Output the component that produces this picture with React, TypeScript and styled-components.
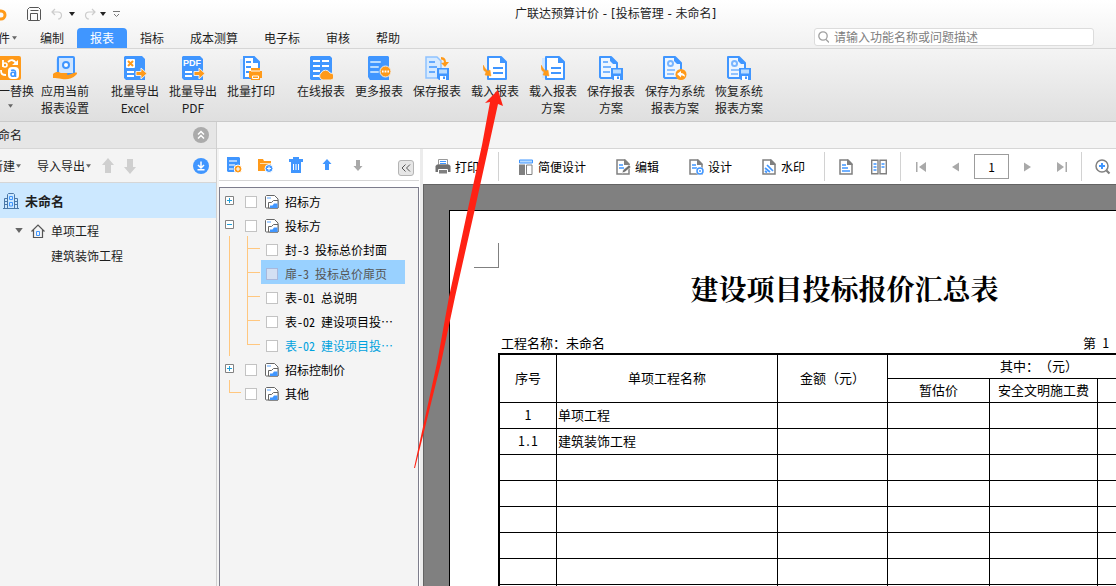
import React from "react";
import styled, { createGlobalStyle, css } from "styled-components";

const UI_FONT = `"Noto Sans CJK SC", "Liberation Sans", sans-serif`;
const MONO_FONT = `"Noto Sans Mono CJK SC", "Noto Sans CJK SC", monospace`;

const BLUE = "#4096ff";
const ORANGE = "#ff9a1a";
const LINE = "#d6d6d6";
const GUIDE = "#ffc77f";

const GlobalStyle = createGlobalStyle`
  *, *::before, *::after { box-sizing: border-box; }
  body { margin: 0; font: 12px/16px ${UI_FONT}; color: #1e1e1e; overflow: hidden; text-spacing-trim: space-all; }
  button, input { font: inherit; color: inherit; margin: 0; }
  button { border: 0; padding: 0; background: none; white-space: nowrap; }
  svg { display: block; flex: none; }
  ul { list-style: none; margin: 0; padding: 0; }
`;

/* ---------- window frame ---------- */

const AppWindow = styled.div`
  display: flex;
  flex-direction: column;
  height: 100vh;
  position: relative;
  overflow: hidden;
  background: #f4f4f4;
`;

const TopArea = styled.header`
  flex: none;
  background: linear-gradient(#ffffff, #f1f1f1);
  border-bottom: 1px solid ${LINE};
`;

const TitleBar = styled.div`
  display: flex;
  align-items: center;
  height: 28px;
`;

const QuickAccess = styled.div`
  display: flex;
  align-items: center;
  flex: none;
  width: 515px;
  height: 24px;
`;

const QuickButton = styled.button<{ $w: number }>`
  display: flex;
  align-items: center;
  justify-content: center;
  width: ${(p) => p.$w}px;
  height: 20px;
`;

const WindowTitle = styled.h1`
  margin: 0;
  font-family: "DejaVu Sans", "Noto Sans CJK SC", sans-serif;
  font-size: 12px;
  font-weight: 400;
  line-height: 28px;
  white-space: nowrap;
`;

const Clip = styled.div<{ $w: number }>`
  display: flex;
  flex: none;
  justify-content: flex-end;
  align-items: center;
  width: ${(p) => p.$w}px;
  overflow: hidden;
  white-space: nowrap;
`;

const MenuBar = styled.nav`
  display: flex;
  height: 20px;
  padding-right: 22px;
`;

const MenuTab = styled.button<{ $active?: boolean }>`
  flex: none;
  padding: 0 13px;
  line-height: 20px;
  border-radius: 4px 4px 0 0;
  ${(p) => p.$active && css`background: ${BLUE}; color: #fff;`}
`;

const FileTab = styled.button`
  display: flex;
  flex: none;
  align-items: center;
  gap: 2px;
  padding-right: 10px;
  line-height: 20px;
`;

const SearchBox = styled.label`
  display: flex;
  align-items: center;
  gap: 5px;
  width: 280px;
  height: 18px;
  margin-left: auto;
  padding: 0 3px;
  background: #fff;
  border: 1px solid #dcdcdc;
  border-radius: 3px;
`;

const SearchInput = styled.input`
  flex: 1;
  min-width: 0;
  height: 16px;
  padding: 0;
  border: 0;
  outline: 0;
  background: transparent;
  &::placeholder { color: #808080; opacity: 1; }
`;

/* ---------- ribbon ---------- */

const Ribbon = styled.div`
  display: flex;
  flex: none;
  height: 73px;
  background: linear-gradient(#f4f4f4, #dfdfdf);
  border-bottom: 1px solid #cacaca;
`;

const RibbonGroup = styled.div`
  display: flex;
  & + & { margin-left: 12px; }
`;

const RibbonButton = styled.button<{ $w?: number; $start?: boolean }>`
  display: flex;
  flex: none;
  flex-direction: column;
  align-items: ${(p) => (p.$start ? "flex-start" : "center")};
  width: ${(p) => p.$w ?? 58}px;
  height: 72px;
  padding-top: 7px;
  line-height: 17px;
`;

const RibbonLabel = styled.span`
  padding-top: 2px;
  text-align: center;
  white-space: pre-line;
`;

const RibbonCaret = styled.span`
  padding: 5px 0 0 10px;
`;

/* ---------- workspace ---------- */

const Workspace = styled.main`
  display: flex;
  flex: 1;
  min-height: 0;
`;

const ProjectPane = styled.aside`
  flex: none;
  width: 217px;
  border-right: 1px solid #d0d0d0;
`;

const PaneBar = styled.div<{ $shade?: boolean }>`
  display: flex;
  align-items: center;
  height: ${(p) => (p.$shade ? 27 : 34)}px;
  padding-right: 7px;
  background: ${(p) => (p.$shade ? "#e6e6e6" : "#f4f4f4")};
  border-bottom: 1px solid ${LINE};
`;

const RoundButton = styled.button`
  margin-left: auto;
`;

const DropButton = styled.button`
  display: flex;
  align-items: center;
  gap: 1px;
`;

const BarGap = styled.span<{ $w: number }>`
  flex: none;
  width: ${(p) => p.$w}px;
`;

const ProjectRow = styled.li<{ $selected?: boolean; $level?: number }>`
  display: flex;
  align-items: center;
  height: ${(p) => (p.$selected ? 35 : 25)}px;
  gap: 6px;
  padding-left: ${(p) => (p.$level === 2 ? 51 : p.$level === 1 ? 15 : 3)}px;
  ${(p) =>
    p.$selected &&
    css`
      background: #cce8ff;
      font-size: 13px;
      font-weight: 700;
    `}
`;

const DocumentArea = styled.section`
  display: flex;
  flex: 1;
  flex-direction: column;
  min-width: 0;
`;

const DocumentStrip = styled.div`
  flex: none;
  height: 27px;
  border-bottom: 1px solid ${LINE};
`;

const DocumentBody = styled.div`
  display: flex;
  flex: 1;
  min-height: 0;
  padding-left: 2px;
`;

const ReportPane = styled.section`
  display: flex;
  flex: none;
  flex-direction: column;
  width: 204px;
  padding-right: 4px;
  background: linear-gradient(to left, #ececec 3px, #fff 3px);
`;

const ReportTools = styled.div`
  display: flex;
  align-items: center;
  gap: 15px;
  height: 32px;
  padding: 0 5px 0 7px;
  border-bottom: 1px solid ${LINE};
`;

const CollapseButton = styled.button`
  display: flex;
  align-items: center;
  justify-content: center;
  align-self: flex-end;
  width: 16px;
  height: 16px;
  margin: 0 0 4px auto;
  background: #e6e6e6;
  border: 1px solid #b4b4b4;
  border-radius: 3px;
`;

const ReportTree = styled.ul`
  flex: 1;
  margin-top: 6px;
  background: #f4f4f4;
  border: 1px solid #7d7d8c;
  border-bottom: 0;
  font-family: ${MONO_FONT};
  color: #000;
`;

const TreeRow = styled.li`
  display: flex;
  align-items: center;
  height: 24px;
`;

const TreeLabel = styled.label<{ $child?: boolean; $selected?: boolean; $link?: boolean }>`
  display: flex;
  flex: none;
  align-items: center;
  width: 144px;
  height: 24px;
  padding: 4px 0 0 ${(p) => (p.$child ? 5 : 0)}px;
  gap: ${(p) => (p.$child ? 7 : 6)}px;
  line-height: 20px;
  white-space: nowrap;
  color: ${(p) => (p.$selected ? "#555" : p.$link ? "#00a2de" : "#000")};
  background: ${(p) => (p.$selected ? "#99d1ff" : "transparent")};
`;

const TreeCheck = styled.input<{ $dim?: boolean }>`
  appearance: none;
  flex: none;
  width: 12px;
  height: 12px;
  background: ${(p) => (p.$dim ? "#d3e0f3" : "#fff")};
  border: 1px solid ${(p) => (p.$dim ? "#a8b8dc" : "#c3c3c3")};
`;

const Expander = styled.button`
  flex: none;
  width: 9px;
  height: 9px;
  margin: 0 11px 0 5px;
`;

const FolderMark = styled.span`
  flex: none;
  padding-left: 2px;
`;

const Trunk = styled.span`
  flex: none;
  width: 18px;
  height: 24px;
  margin-left: 9px;
  border-left: 1px solid ${GUIDE};
`;

const Branch = styled.span<{ $last?: boolean; $root?: boolean }>`
  display: grid;
  flex: none;
  grid-template-rows: 13px 11px;
  width: ${(p) => (p.$root ? 12 : 13)}px;
  height: 24px;
  margin: ${(p) => (p.$root ? "0 4px 0 9px" : "0 1px 0 0")};
  &::before {
    content: "";
    border-left: 1px solid ${GUIDE};
    border-bottom: 1px solid ${GUIDE};
  }
  &::after {
    content: "";
    border-left: ${(p) => (p.$last ? 0 : 1)}px solid ${GUIDE};
  }
`;

/* ---------- preview ---------- */

const Preview = styled.section`
  display: flex;
  flex: 1;
  flex-direction: column;
  min-width: 0;
  overflow: hidden;
`;

const PreviewTools = styled.div`
  display: flex;
  flex: none;
  height: 35px;
  background: #fff;
  color: #000;
`;

const ToolGroup = styled.div<{ $gap: number; $left: number; $right: number }>`
  display: flex;
  flex: none;
  align-items: center;
  gap: ${(p) => p.$gap}px;
  padding: 0 ${(p) => p.$right}px 0 ${(p) => p.$left}px;
`;

const ToolDivider = styled.span`
  flex: none;
  width: 1px;
  height: 29px;
  margin-top: 3px;
  background: #d2d2d2;
`;

const ToolButton = styled.button`
  display: flex;
  align-items: center;
  gap: 4px;
`;

const PageInput = styled.input`
  width: 35px;
  height: 25px;
  padding: 0;
  border: 1px solid #9c9c9c;
  text-align: center;
  background: #fff;
`;

const Desk = styled.div`
  flex: 1;
  padding: 25px 0 0 25px;
  background: #808080;
  border: solid #636363;
  border-width: 1px 0 0 1px;
  overflow: hidden;
`;

const Paper = styled.article`
  width: 791px;
  padding: 32px 48px 48px;
  background: #fff;
  border: 1px solid #000;
  font: 13px/20px ${MONO_FONT};
  color: #000;
`;

const CropMark = styled.div`
  width: 25px;
  height: 25px;
  margin-left: -24px;
  border: solid #808080;
  border-width: 0 1px 1px 0;
`;

const ReportTitle = styled.h2`
  margin: 2px 0 27px;
  font-family: "Noto Serif CJK SC", "Noto Sans CJK SC", serif;
  font-size: 28px;
  font-weight: 700;
  line-height: 36px;
  text-align: center;
  white-space: nowrap;
`;

const ReportInfo = styled.div`
  display: flex;
  justify-content: space-between;
  padding-left: 3px;
`;

const PageNumber = styled.span`
  width: 108px;
`;

const ReportTable = styled.table`
  width: 693px;
  table-layout: fixed;
  border: solid #000;
  border-width: 2px 0 0 2px;
  border-spacing: 0;
  th, td {
    padding: 0 1px 1px;
    font-weight: 400;
    line-height: 20px;
    border: solid #000;
    border-width: 0 1px 1px 0;
    white-space: nowrap;
  }
  th { height: 24px; }
  td { height: 26px; }
  td:first-child { text-align: center; }
`;

const Annotation = styled.svg`
  position: absolute;
  top: 0;
  left: 0;
  pointer-events: none;
`;

/* ---------- icons ---------- */

const Caret = ({ color = "#666", w = 5 }: { color?: string; w?: number }) => (
  <svg width={w} height={w > 6 ? 5 : 4} viewBox="0 0 6 4"><path d="M0 0h6L3 4z" fill={color} /></svg>
);

const Big = ({ children }: { children: React.ReactNode }) => (
  <svg width="24" height="24" viewBox="0 0 24 24" fill="none">{children}</svg>
);

const Small = ({ children }: { children: React.ReactNode }) => (
  <svg width="16" height="16" viewBox="0 0 16 16" fill="none">{children}</svg>
);

const ReplaceIcon = () => (
  <Big>
    <rect x="-1" y="0" width="24" height="24" rx="2" fill={ORANGE} />
    <path d="M5 4v7" stroke="#fff" strokeWidth="1.800" />
    <circle cx="7" cy="9" r="2" stroke="#fff" strokeWidth="1.600" />
    <path d="M10 6c3-3 6-2 8 1" stroke="#fff" strokeWidth="1.800" />
    <path d="M20 4v5h-6z" fill="#fff" />
    <rect x="10" y="11" width="11" height="12" rx="4" fill="#fff" />
    <circle cx="15" cy="18.200" r="2" stroke={BLUE} strokeWidth="1.600" />
    <path d="M13 14.500c3-1 4.500 0 4.500 2v4.500" stroke={BLUE} strokeWidth="1.600" />
    <path d="M3 14c0 4 1 5 5 5" stroke="#fff" strokeWidth="1.800" />
  </Big>
);

const ApplyIcon = () => (
  <Big>
    <path d="M3 3v14h3V3z" fill="#cfe5ff" />
    <rect x="5" y="1" width="16" height="17" rx="1" fill="#cfe5ff" stroke={BLUE} strokeWidth="2" />
    <circle cx="13" cy="9" r="3" fill="#fff" stroke={BLUE} strokeWidth="2" />
    <path d="M0 18c3-3 6-2 8-1h5c2 0 2 2 0 2h-3 5l6-2c3-1 4 0 2 2-4 4-9 5-14 4-4-1-6-1-9-1z" fill={ORANGE} />
  </Big>
);

const ExportArrow = () => (
  <path d="M13 15.500h5V12l6 5.500-6 5.500v-3.500h-5z" fill={ORANGE} stroke="#eee" strokeWidth="1" />
);

const ExcelIcon = () => (
  <Big>
    <path d="M2 0h17l3 3v21H3l-2-2V1z" fill={BLUE} />
    <rect x="3" y="3" width="9" height="9" rx="1" fill="#fff" />
    <path d="M5 5l5 5M10 5l-5 5" stroke={ORANGE} strokeWidth="2" />
    <path d="M4 16h7M4 20h7" stroke="#fff" strokeWidth="2" />
    <ExportArrow />
  </Big>
);

const PdfIcon = () => (
  <Big>
    <path d="M2 0h17l3 3v21H3l-2-2V1z" fill={BLUE} />
    <text x="2" y="10" fill="#fff" fontFamily="Liberation Sans" fontWeight="700" fontSize="9">PDF</text>
    <path d="M4 16h7M4 20h7" stroke="#fff" strokeWidth="2" />
    <ExportArrow />
  </Big>
);

const BatchPrintIcon = () => (
  <Big>
    <path d="M1 3h5v20H1z" fill="#cfe5ff" />
    <path d="M5 1h10l5 5v16H5z" fill="#fff" stroke={BLUE} strokeWidth="2" />
    <path d="M14 0l7 7h-7z" fill={BLUE} />
    <path d="M7 6h5M7 11h5M7 16h3" stroke={BLUE} strokeWidth="2" />
    <path d="M12 12h9v3h2v7h-2v2h-9v-2h-2v-7h2z" fill={ORANGE} />
    <path d="M12 15h9M13.500 20h6v2.500h-6z" stroke="#fff" strokeWidth="1" />
  </Big>
);

const OnlineIcon = () => (
  <Big>
    <path d="M2 0h19l2 2v20l-2 2H2l-1-1V1z" fill={BLUE} />
    <path d="M4 5h7m2 0h7M4 10h7m2 0h7M4 15h7M4 20h7" stroke="#fff" strokeWidth="2" />
    <path d="M14 24a4 4 0 0 1-2-7 5 5 0 0 1 9 0 3.500 3.500 0 0 1 1 7z" fill={ORANGE} stroke="#eee" />
  </Big>
);

const MoreIcon = () => (
  <Big>
    <path d="M2 0h19l1 1v23H3l-2-3V1z" fill={BLUE} />
    <path d="M4 6h9M4 11h7M4 16h7" stroke="#b9dcff" strokeWidth="2" strokeLinecap="round" />
    <circle cx="18.500" cy="15.500" r="5.500" fill={ORANGE} stroke="#eee" />
    <path d="M15 15.500h1.600m1 0h1.800m1 0h1.600" stroke="#fff" strokeWidth="2" />
  </Big>
);

const DiskMark = () => (
  <>
    <path d="M12 12h12v12H14l-2-2z" fill={BLUE} />
    <path d="M14 13.500h8v4h-8z" fill="#b9dcff" />
    <path d="M15 20h6v4h-6z" fill="#fff" />
    <path d="M18 20.500h2V23h-2z" fill={BLUE} />
  </>
);

const SaveReportIcon = () => (
  <Big>
    <path d="M1 1h11l4 4v17H1z" fill="#d6eaff" stroke="#8fc2ff" strokeWidth="1.500" />
    <path d="M4 6h6M4 11h8M4 16h6" stroke={BLUE} strokeWidth="1.500" />
    <path d="M16 1c4 0 5 3 5 5h3l-4 5-4-4 3-.5c0-2-1-3-3-3z" fill={ORANGE} />
    <DiskMark />
  </Big>
);

const LoadIcon = ({ tinted }: { tinted?: boolean }) => (
  <Big>
    {tinted && <path d="M1 2h7v20H1z" fill="#cfe5ff" />}
    <path d="M5 1h13l5 5v17H5z" fill="#fff" stroke={BLUE} strokeWidth="2" strokeLinejoin="round" />
    <path d="M17 0l7 7h-7z" fill={BLUE} />
    <path d="M10 12h10M10 17h10" stroke={BLUE} strokeWidth="2" />
    <path d="M0 9c0 5 1 6 3 7l-1 3 6 1-1-6-2 1c-2-1-3-3-5-6z" fill={ORANGE} stroke={ORANGE} strokeWidth=".5" />
  </Big>
);

const PlanSheet = ({ gear }: { gear?: boolean }) => (
  <>
    <path d="M1 1h11l6 6v15H2l-1-1z" fill="#eef6ff" stroke={BLUE} strokeWidth="2" strokeLinejoin="round" />
    <path d="M11 0l8 8h-5l-3-3z" fill={BLUE} />
    {gear ? (
      <>
        <circle cx="7.500" cy="7.500" r="2.500" stroke="#78b5ff" strokeWidth="2" />
        <path d="M4 14h8M4 18h7" stroke="#8fc2ff" strokeWidth="2" />
      </>
    ) : (
      <path d="M4 6h5M4 11h8M4 16h7" stroke="#78b5ff" strokeWidth="2" />
    )}
  </>
);

const SavePlanIcon = () => <Big><PlanSheet /><DiskMark /></Big>;
const RestoreIcon = () => <Big><PlanSheet gear /><DiskMark /></Big>;
const SystemPlanIcon = () => (
  <Big>
    <PlanSheet gear />
    <circle cx="18" cy="18.500" r="5.500" fill={ORANGE} />
    <path d="M14 18l4-3v2c2 0 4 1 4 4-1-1-2-1.500-4-1.500v2z" fill="#fff" />
  </Big>
);

const SheetOutline = () => (
  <>
    <path d="M2 1h8l4 4v10H2z" stroke="#808080" strokeWidth="1.500" />
    <path d="M9 0l6 6H9z" fill="#808080" />
  </>
);

const PrinterIcon = () => (
  <Small>
    <path d="M3.500.5h9V6h-9z" fill="#fff" stroke="#9a9a9a" />
    <path d="M5 2.500h6M5 4.500h6" stroke={BLUE} />
    <path d="M2 5.500h12l1.500 1.500v6H.5V7z" fill="#707070" />
    <path d="M3.500 10.500h9v4.500h-9z" fill="#808080" stroke="#fff" />
  </Small>
);
const LayoutIcon = () => (
  <Small>
    <path d="M1.500 1h13v3h-13z" fill="#b9dcff" stroke={BLUE} />
    <path d="M1 5.500h6V16H1z" fill="#808080" />
    <path d="M8.500 6h5.500v9.500H8.500z" stroke="#808080" />
  </Small>
);
const EditIcon = () => (
  <Small>
    <SheetOutline />
    <path d="M4 6h4M4 9h5" stroke={BLUE} strokeWidth="1.500" />
    <path d="M7 14l1-3 6-5 2 2-6 5z" fill="#6e6e6e" stroke="#fff" strokeWidth=".6" />
  </Small>
);
const DesignIcon = () => (
  <Small>
    <SheetOutline />
    <path d="M4 6h4M4 9h5" stroke={BLUE} strokeWidth="1.500" />
    <circle cx="12" cy="12" r="4" fill="#fff" />
    <circle cx="12" cy="12" r="3" stroke={BLUE} strokeWidth="1.500" />
    <circle cx="12" cy="12" r="1" fill={BLUE} />
  </Small>
);
const WatermarkIcon = () => (
  <Small>
    <SheetOutline />
    <path d="M4 9l5 4M6 6l6 6M4 12l2 1.500" stroke={BLUE} strokeWidth="1.700" />
  </Small>
);
const SinglePageIcon = () => (
  <Small>
    <path d="M2 1h8l4 4v10H2z" stroke="#808080" strokeWidth="1.500" />
    <path d="M9 0l6 6H9z" fill="#808080" />
    <path d="M4 6h4M4 9h6M4 12h8" stroke={BLUE} strokeWidth="1.500" />
  </Small>
);
const DoublePageIcon = () => (
  <Small>
    <path d="M.7 1.200h6.300v13.600H.7zM9 1.200h6.300v13.600H9z" stroke="#808080" strokeWidth="1.400" />
    <path d="M2.500 5h3M2.500 8h3M2.500 11h3M10.500 5h3M10.500 8h3" stroke={BLUE} strokeWidth="1.500" />
  </Small>
);
const NavIcon = ({ next, edge }: { next?: boolean; edge?: boolean }) => (
  <svg width="16" height="16" viewBox="0 0 16 16">
    <g transform={next ? "translate(16 0) scale(-1 1)" : undefined} fill="#a9a9a9">
      <path d={edge ? "M13 3v10L6 8z" : "M12 3.500v9L5 8z"} />
      {edge && <path d="M3 3h1.500v10H3z" />}
    </g>
  </svg>
);
const ZoomInIcon = () => (
  <Small>
    <circle cx="7" cy="7" r="6" stroke="#808080" strokeWidth="1.500" />
    <path d="M11.500 11.500l3 3" stroke="#808080" strokeWidth="2.200" />
    <path d="M7 4v6M4 7h6" stroke={BLUE} strokeWidth="2" />
  </Small>
);

const NewReportIcon = () => (
  <Small>
    <path d="M1 0h12l1 1v14H2l-1-1z" fill={BLUE} />
    <path d="M3 4h8M3 8h6M3 12h4" stroke="#cfe5ff" strokeWidth="1.300" />
    <circle cx="12" cy="12" r="4" fill={ORANGE} stroke="#fff" />
    <path d="M12 10v4M10 12h4" stroke="#fff" strokeWidth="1.200" />
  </Small>
);
const NewFolderIcon = () => (
  <Small>
    <path d="M1 2h5l1 2h7v10H1z" fill={ORANGE} />
    <path d="M3 6h11v1H3z" fill="#ffe0b0" />
    <circle cx="12" cy="11.500" r="4" fill={BLUE} stroke="#fff" />
    <path d="M12 9.500v4M10 11.500h4" stroke="#fff" strokeWidth="1.200" />
  </Small>
);
const TrashIcon = () => (
  <Small>
    <path d="M5 0h6v2h4v3H1V2h4zM3 5h10v11H3z" fill={BLUE} />
    <path d="M5.500 7v6M8 7v6M10.500 7v6" stroke="#fff" />
  </Small>
);
const ArrowIcon = ({ color, down, large }: { color: string; down?: boolean; large?: boolean }) => (
  <svg width={large ? 12 : 16} height="16" viewBox={large ? "2 0 12 16" : "0 0 16 16"}>
    <path
      transform={down ? "rotate(180 8 8)" : undefined}
      d={large ? "M8 0l6 7h-3v8H5V7H2z" : "M8 2l4.500 5H10v6H6V7H3.500z"}
      fill={color}
    />
  </svg>
);

const RoundIcon = ({ color, children }: { color: string; children: React.ReactNode }) => (
  <svg width="16" height="16" viewBox="0 0 16 16" fill="none" stroke="#fff" strokeWidth="1.500">
    <circle cx="8" cy="8" r="8" fill={color} stroke="none" />
    {children}
  </svg>
);

const FolderIcon = () => (
  <svg width="14" height="14" viewBox="0 0 14 14" fill="none">
    <path d="M.5 12.500v-11l1-1h8l3.500 3.500v9H1z" fill="#fff" stroke="#666" />
    <path d="M2 3h4" stroke="#8fc2ff" strokeWidth="1.500" />
    <path d="M3.500 13V7.500h3l2-2h4.500V13z" fill="#fff" stroke="#666" />
    <path d="M5 13v-2.500h2.500L9 8.500h3.500V13z" fill={BLUE} />
  </svg>
);

const BuildingIcon = () => (
  <svg width="16" height="16" viewBox="0 0 16 16" fill="none" stroke="#4a78a8">
    <path d="M0 15.500h16M1.500 15V5.500H5M14.500 15V5.500H11M4.500 15V1.500l1-1h5l1 1V15M2 8.500h2M2 11.500h2M12 8.500h2M12 11.500h2" />
    <path d="M6.500 3.500h3v3h-3zM6.500 9.500h3V13h-3z" stroke={BLUE} />
  </svg>
);

const HouseIcon = () => (
  <svg width="16" height="14" viewBox="-2 0 16 14" fill="none">
    <path d="M.5 7.500L7 1l6.500 6.500M2.500 6v7.500h9V6" stroke="#555" strokeWidth="1.200" />
    <path d="M5.500 7.500h3v4h-3z" stroke={BLUE} />
  </svg>
);

const ExpanderIcon = ({ open }: { open?: boolean }) => (
  <svg width="9" height="9" viewBox="0 0 9 9" fill="none">
    <path d="M.5.5h8v8h-8z" fill="#fff" stroke="#828282" />
    <path d={open ? "M2 4.500h5" : "M2 4.500h5M4.500 2v5"} stroke="#1f9fd8" />
  </svg>
);

/* ---------- data ---------- */

type RibbonItem = { label: string; icon: React.ReactNode; w?: number };

const ribbonGroups: RibbonItem[][] = [
  [{ label: "应用当前\n报表设置", icon: <ApplyIcon /> }],
  [
    { label: "批量导出\nExcel", icon: <ExcelIcon /> },
    { label: "批量导出\nPDF", icon: <PdfIcon /> },
    { label: "批量打印", icon: <BatchPrintIcon /> },
  ],
  [
    { label: "在线报表", icon: <OnlineIcon /> },
    { label: "更多报表", icon: <MoreIcon /> },
    { label: "保存报表", icon: <SaveReportIcon /> },
    { label: "载入报表", icon: <LoadIcon /> },
    { label: "载入报表\n方案", icon: <LoadIcon tinted /> },
    { label: "保存报表\n方案", icon: <SavePlanIcon /> },
    { label: "保存为系统\n报表方案", icon: <SystemPlanIcon />, w: 70 },
    { label: "恢复系统\n报表方案", icon: <RestoreIcon /> },
  ],
];

const bidReports = [
  { label: "封-3 投标总价封面" },
  { label: "扉-3 投标总价扉页", selected: true },
  { label: "表-01 总说明" },
  { label: "表-02 建设项目投…" },
  { label: "表-02 建设项目投…", link: true },
];

const columns = [57, 221, 110, 102, 108, 93];
const rows = [["1", "单项工程"], ["1.1", "建筑装饰工程"], [], [], [], [], [], [], []];

const RootNode = ({ label, open, leaf }: { label: string; open?: boolean; leaf?: boolean }) => (
  <TreeRow>
    {leaf ? (
      <Branch $root $last />
    ) : (
      <Expander aria-label={label}><ExpanderIcon open={open} /></Expander>
    )}
    <TreeLabel>
      <TreeCheck type="checkbox" />
      <FolderMark><FolderIcon /></FolderMark>
      {label}
    </TreeLabel>
  </TreeRow>
);

export default function App() {
  return (
    <AppWindow>
      <GlobalStyle />
      <TopArea>
        <TitleBar>
          <QuickAccess>
            <svg width="8" height="14" viewBox="0 0 8 14" fill="none">
              <path d="M0 4h1a4 4 0 0 1 0 8H0" stroke={ORANGE} strokeWidth="3" />
            </svg>
            <BarGap $w={17} />
            <QuickButton $w={18} aria-label="保存">
              <svg width="14" height="14" viewBox="0 0 14 14" fill="none" stroke="#555">
                <path d="M.5 12.500v-10l2-2h9l2 2v10l-1 1h-11zM3.500 13V6.500h7V13M3.500 3.500h8" />
              </svg>
            </QuickButton>
            <QuickButton $w={28} aria-label="撤销">
              <svg width="12" height="12" viewBox="0 0 12 12" fill="none" stroke="#ccc" strokeWidth="1.200">
                <path d="M4 1L1 4l3 3M1 4h6a3.500 3.500 0 0 1 0 7" />
              </svg>
            </QuickButton>
            <QuickButton $w={1} aria-label="撤销列表"><Caret color="#222" w={6} /></QuickButton>
            <BarGap $w={12} />
            <QuickButton $w={12} aria-label="重做">
              <svg width="12" height="12" viewBox="0 0 12 12" fill="none" stroke="#ccc" strokeWidth="1.200">
                <path d="M8 1l3 3-3 3M11 4H5a3.500 3.500 0 0 0 0 7" />
              </svg>
            </QuickButton>
            <QuickButton $w={14} aria-label="重做列表"><Caret color="#222" w={6} /></QuickButton>
            <QuickButton $w={12} aria-label="自定义">
              <svg width="7" height="7" viewBox="0 0 7 7" fill="none" stroke="#777">
                <path d="M0 .5h7M1 3l2.500 2.500L6 3" />
              </svg>
            </QuickButton>
          </QuickAccess>
          <WindowTitle>广联达预算计价 - [投标管理 - 未命名]</WindowTitle>
        </TitleBar>
        <MenuBar>
          <Clip $w={27}><FileTab>件<Caret /></FileTab></Clip>
          <MenuTab>编制</MenuTab>
          <MenuTab $active>报表</MenuTab>
          <MenuTab>指标</MenuTab>
          <MenuTab>成本测算</MenuTab>
          <MenuTab>电子标</MenuTab>
          <MenuTab>审核</MenuTab>
          <MenuTab>帮助</MenuTab>
          <SearchBox>
            <svg width="11" height="12" viewBox="0 0 11 12" fill="none" stroke="#a0a0a0" strokeWidth="1.300">
              <circle cx="5" cy="5" r="4.200" /><path d="M8 8.500l3 3" />
            </svg>
            <SearchInput placeholder="请输入功能名称或问题描述" />
          </SearchBox>
        </MenuBar>
      </TopArea>

      <Ribbon>
        <Clip $w={36}>
          <RibbonButton $w={38} $start>
            <ReplaceIcon />
            <RibbonLabel>一替换</RibbonLabel>
            <RibbonCaret><Caret /></RibbonCaret>
          </RibbonButton>
        </Clip>
        {ribbonGroups.map((group, i) => (
          <RibbonGroup key={i}>
            {group.map((item) => (
              <RibbonButton key={item.label} $w={item.w}>
                {item.icon}
                <RibbonLabel>{item.label}</RibbonLabel>
              </RibbonButton>
            ))}
          </RibbonGroup>
        ))}
      </Ribbon>

      <Workspace>
        <ProjectPane>
          <PaneBar $shade>
            <Clip $w={22}>命名</Clip>
            <RoundButton aria-label="收起">
              <RoundIcon color="#ababab"><path d="M5 7.500l3-3 3 3M5 11.500l3-3 3 3" /></RoundIcon>
            </RoundButton>
          </PaneBar>
          <PaneBar>
            <Clip $w={21}><DropButton>新建<Caret /></DropButton></Clip>
            <BarGap $w={16} />
            <DropButton>导入导出<Caret /></DropButton>
            <BarGap $w={11} />
            <ArrowIcon color="#cfcfcf" large />
            <BarGap $w={10} />
            <ArrowIcon color="#cfcfcf" large down />
            <RoundButton aria-label="下载">
              <RoundIcon color={BLUE}><path d="M8 3.500v6M5 7l3 3 3-3M4.500 11.800h7" /></RoundIcon>
            </RoundButton>
          </PaneBar>
          <ul>
            <ProjectRow $selected><BuildingIcon />未命名</ProjectRow>
            <ProjectRow $level={1}>
              <Caret w={8} />
              <HouseIcon />
              单项工程
            </ProjectRow>
            <ProjectRow $level={2}>建筑装饰工程</ProjectRow>
          </ul>
        </ProjectPane>

        <DocumentArea>
          <DocumentStrip />
          <DocumentBody>
            <ReportPane>
              <ReportTools>
                <button aria-label="新建报表"><NewReportIcon /></button>
                <button aria-label="新建分组"><NewFolderIcon /></button>
                <button aria-label="删除"><TrashIcon /></button>
                <button aria-label="上移"><ArrowIcon color={BLUE} /></button>
                <button aria-label="下移"><ArrowIcon color="#a9a9a9" down /></button>
                <CollapseButton aria-label="折叠">
                  <svg width="10" height="8" viewBox="0 0 10 8" fill="none" stroke="#555">
                    <path d="M4.500.5L1 4l3.500 3.500M9 .5L5.500 4 9 7.500" />
                  </svg>
                </CollapseButton>
              </ReportTools>
              <ReportTree>
                <RootNode label="招标方" />
                <RootNode label="投标方" open />
                {bidReports.map((r, i) => (
                  <TreeRow key={i}>
                    <Trunk />
                    <Branch $last={i === bidReports.length - 1} />
                    <TreeLabel $child $selected={r.selected} $link={r.link}>
                      <TreeCheck type="checkbox" $dim={r.selected} />
                      {r.label}
                    </TreeLabel>
                  </TreeRow>
                ))}
                <RootNode label="招标控制价" />
                <RootNode label="其他" leaf />
              </ReportTree>
            </ReportPane>

            <Preview>
              <PreviewTools>
                <ToolGroup $gap={29} $left={12} $right={19}>
                  <ToolButton><PrinterIcon />打印</ToolButton>
                </ToolGroup>
                <ToolDivider />
                <ToolGroup $gap={29} $left={19} $right={19}>
                  <ToolButton><LayoutIcon />简便设计</ToolButton>
                  <ToolButton><EditIcon />编辑</ToolButton>
                  <ToolButton><DesignIcon />设计</ToolButton>
                  <ToolButton><WatermarkIcon />水印</ToolButton>
                </ToolGroup>
                <ToolDivider />
                <ToolGroup $gap={17} $left={13} $right={13}>
                  <button aria-label="单页"><SinglePageIcon /></button>
                  <button aria-label="双页"><DoublePageIcon /></button>
                </ToolGroup>
                <ToolDivider />
                <ToolGroup $gap={11} $left={12} $right={11}>
                  <ToolGroup $gap={18} $left={0} $right={0}>
                    <button aria-label="首页"><NavIcon edge /></button>
                    <button aria-label="上一页"><NavIcon /></button>
                  </ToolGroup>
                  <PageInput aria-label="页码" defaultValue="1" />
                  <ToolGroup $gap={18} $left={0} $right={0}>
                    <button aria-label="下一页"><NavIcon next /></button>
                    <button aria-label="末页"><NavIcon next edge /></button>
                  </ToolGroup>
                </ToolGroup>
                <ToolDivider />
                <ToolGroup $gap={17} $left={13} $right={13}>
                  <button aria-label="放大"><ZoomInIcon /></button>
                </ToolGroup>
              </PreviewTools>
              <Desk>
                <Paper>
                  <CropMark />
                  <ReportTitle>建设项目投标报价汇总表</ReportTitle>
                  <ReportInfo>
                    <span>工程名称：未命名</span>
                    <PageNumber>第 1</PageNumber>
                  </ReportInfo>
                  <ReportTable>
                    <colgroup>
                      {columns.map((w, i) => <col key={i} width={w} />)}
                    </colgroup>
                    <thead>
                      <tr>
                        <th rowSpan={2}>序号</th>
                        <th rowSpan={2}>单项工程名称</th>
                        <th rowSpan={2}>金额（元）</th>
                        <th colSpan={3}>其中：（元）</th>
                      </tr>
                      <tr>
                        <th>暂估价</th>
                        <th>安全文明施工费</th>
                        <th />
                      </tr>
                    </thead>
                    <tbody>
                      {rows.map((row, i) => (
                        <tr key={i}>
                          {columns.map((_, c) => <td key={c}>{row[c]}</td>)}
                        </tr>
                      ))}
                    </tbody>
                  </ReportTable>
                </Paper>
              </Desk>
            </Preview>
          </DocumentBody>
        </DocumentArea>
      </Workspace>

      <Annotation width="520" height="480" viewBox="0 0 520 480">
        <path d="M498 90L503 106L498 104L489 145L474 213L455 297L441 363L415 468L414 468L437 363L449 297L467 213L482 145L490 102L485 103Z" fill="#ff2214" />
      </Annotation>
    </AppWindow>
  );
}
